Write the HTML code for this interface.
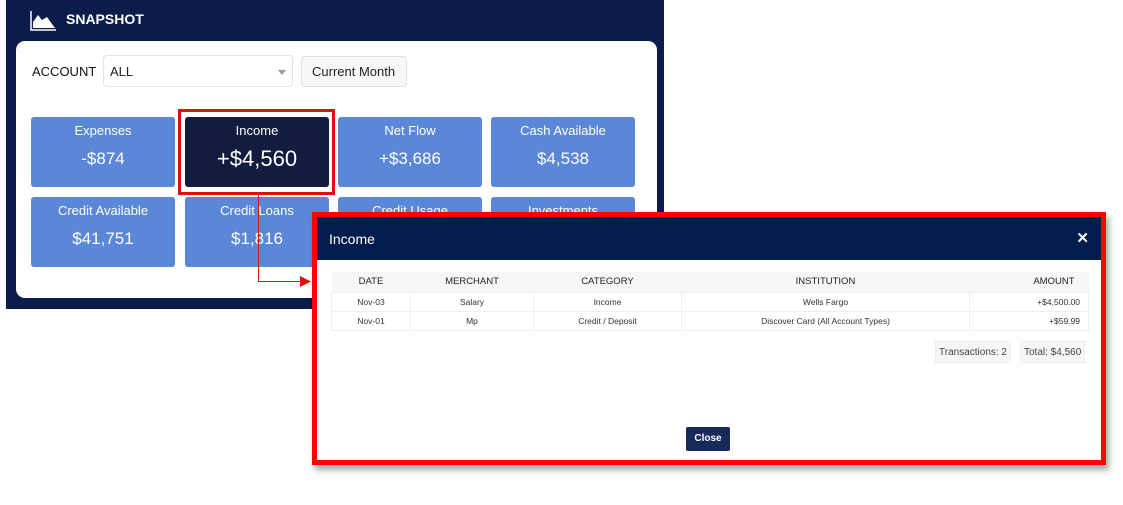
<!DOCTYPE html>
<html><head><meta charset="utf-8"><style>
*{box-sizing:border-box;margin:0;padding:0}
body{width:1123px;height:505px;background:#fff;position:relative;overflow:hidden;font-family:"Liberation Sans",sans-serif}
.panel{position:absolute;left:6px;top:0;width:658px;height:309px;background:#0b1c4b}
.title{position:absolute;left:66px;top:11px;color:#fff;font-weight:bold;font-size:14px}
.card{position:absolute;left:16px;top:41px;width:641px;height:257px;background:#fff;border-radius:9px}
.lbl{position:absolute;left:32px;top:64px;font-size:13px;color:#111}
.sel{position:absolute;left:103px;top:55px;width:190px;height:32px;border:1px solid #e2e2e2;border-radius:4px;font-size:13px;padding:8px 0 0 6px;color:#222}
.sel:after{content:"";position:absolute;right:6px;top:14px;border:4px solid transparent;border-top:5px solid #999}
.btn{position:absolute;left:301px;top:56px;width:106px;height:31px;border:1px solid #e2e2e2;background:#f7f7f7;border-radius:4px;font-size:13px;padding:7px 0 0 10px;color:#222}
.t{position:absolute;width:144px;height:70px;background:#5b87d9;border-radius:3px;color:#fff;text-align:center}
.t .a{font-size:13px;margin-top:6px}
.t .b{font-size:17px;margin-top:11px}
.t.d{background:#121c3e}
.t.d .b{font-size:22px;margin-top:8px}
.red1{position:absolute;left:178px;top:109px;width:157px;height:86px;border:3px solid #e01010}
.modal{position:absolute;left:312px;top:212px;width:794px;height:253px;border:5px solid #f00;background:#fff;box-shadow:3px 5px 6px rgba(0,0,0,.35)}
.mh{height:43px;background:#021c4c;color:#fff;font-size:14px;padding:14px 0 0 12px;position:relative}
.mh .x{position:absolute;right:12px;top:12px;font-weight:bold;font-size:15px}
table{position:absolute;left:14px;top:55px;width:758px;border-collapse:collapse;font-size:8.5px;color:#333}
th{height:20px;background:#f6f6f6;font-weight:normal;font-size:9.5px;color:#222}
td{height:19px;text-align:center;border:1px solid #eee}
.bd{position:absolute;top:124px;height:22px;border:1px solid #eee;background:#f6f6f6;font-size:10px;color:#444;padding:5px 3px 0 3px}
.cl{position:absolute;left:369px;top:210px;width:44px;height:24px;background:#18295a;border-radius:2px;color:#fff;font-size:10px;font-weight:bold;text-align:center;padding-top:6px}
</style></head><body>
<div class="panel"></div>
<svg style="position:absolute;left:29px;top:10px" width="28" height="22" viewBox="0 0 28 22"><path d="M2 1V20H27" stroke="#fff" stroke-width="1.5" fill="none"/><path d="M4 18L4 12L9 5L13 10L18 7L23 14L26 18Z" fill="#fff"/></svg>
<div class="title">SNAPSHOT</div>
<div class="card"></div>
<div class="lbl">ACCOUNT</div>
<div class="sel">ALL</div>
<div class="btn">Current Month</div>
<div class="t" style="left:31px;top:117px"><div class="a">Expenses</div><div class="b">-$874</div></div>
<div class="t d" style="left:185px;top:117px"><div class="a">Income</div><div class="b">+$4,560</div></div>
<div class="t" style="left:338px;top:117px"><div class="a">Net Flow</div><div class="b">+$3,686</div></div>
<div class="t" style="left:491px;top:117px"><div class="a">Cash Available</div><div class="b">$4,538</div></div>
<div class="t" style="left:31px;top:197px"><div class="a">Credit Available</div><div class="b">$41,751</div></div>
<div class="t" style="left:185px;top:197px"><div class="a">Credit Loans</div><div class="b">$1,816</div></div>
<div class="t" style="left:338px;top:197px"><div class="a">Credit Usage</div></div>
<div class="t" style="left:491px;top:197px"><div class="a">Investments</div></div>
<div class="red1"></div>
<svg style="position:absolute;left:0;top:0" width="320" height="300"><path d="M258.5 194V281.5H302" stroke="#e01010" stroke-width="1" fill="none"/><path d="M300 276L311 281.5L300 287Z" fill="#e01010"/></svg>
<div class="modal">
<div class="mh">Income<span class="x">✕</span></div>
<table>
<tr><th style="width:79px">DATE</th><th style="width:123px">MERCHANT</th><th style="width:148px">CATEGORY</th><th style="width:288px">INSTITUTION</th><th style="text-align:right;padding-right:14px">AMOUNT</th></tr>
<tr><td>Nov-03</td><td>Salary</td><td>Income</td><td>Wells Fargo</td><td style="text-align:right;padding-right:8px">+$4,500.00</td></tr>
<tr><td>Nov-01</td><td>Mp</td><td>Credit / Deposit</td><td>Discover Card (All Account Types)</td><td style="text-align:right;padding-right:8px">+$59.99</td></tr>
</table>
<div class="bd" style="left:618px">Transactions: 2</div>
<div class="bd" style="left:703px">Total: $4,560</div>
<div class="cl">Close</div>
</div>
</body></html>
